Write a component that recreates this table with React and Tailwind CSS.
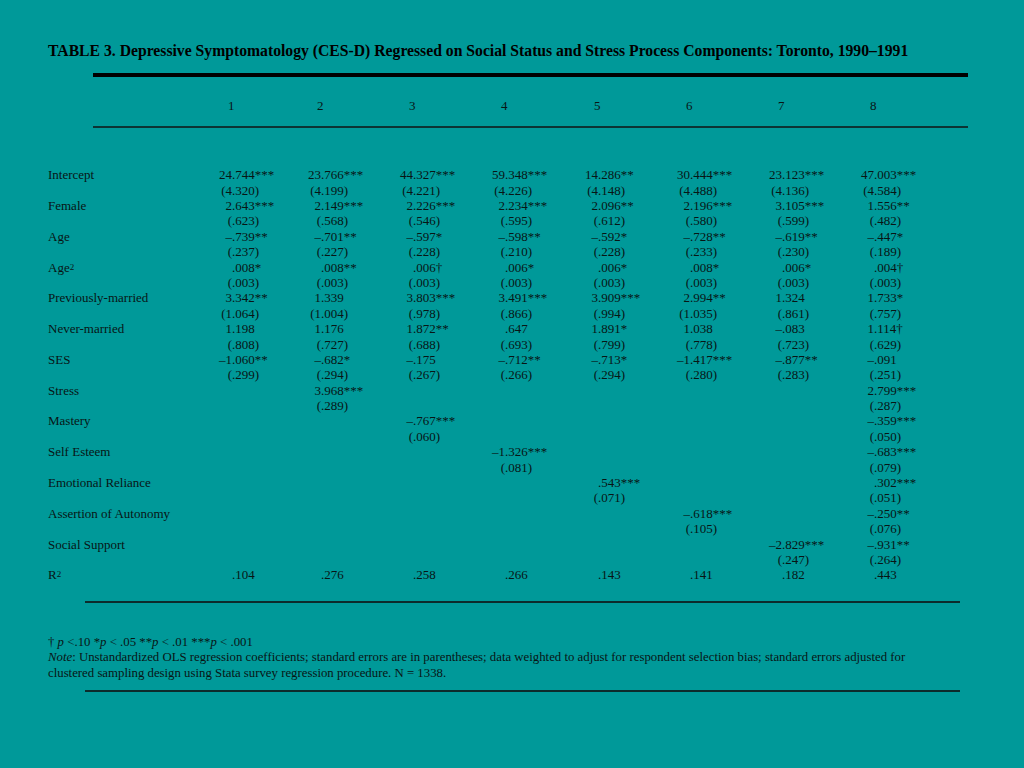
import React from "react";

const rows = [
  { label: "Intercept", c: ["24.744***", "23.766***", "44.327***", "59.348***", "14.286**", "30.444***", "23.123***", "47.003***"], s: ["(4.320)", "(4.199)", "(4.221)", "(4.226)", "(4.148)", "(4.488)", "(4.136)", "(4.584)"] },
  { label: "Female", c: ["2.643***", "2.149***", "2.226***", "2.234***", "2.096**", "2.196***", "3.105***", "1.556**"], s: ["(.623)", "(.568)", "(.546)", "(.595)", "(.612)", "(.580)", "(.599)", "(.482)"] },
  { label: "Age", c: ["–.739**", "–.701**", "–.597*", "–.598**", "–.592*", "–.728**", "–.619**", "–.447*"], s: ["(.237)", "(.227)", "(.228)", "(.210)", "(.228)", "(.233)", "(.230)", "(.189)"] },
  { label: "Age2", sup: true, c: [".008*", ".008**", ".006†", ".006*", ".006*", ".008*", ".006*", ".004†"], s: ["(.003)", "(.003)", "(.003)", "(.003)", "(.003)", "(.003)", "(.003)", "(.003)"] },
  { label: "Previously-married", c: ["3.342**", "1.339", "3.803***", "3.491***", "3.909***", "2.994**", "1.324", "1.733*"], s: ["(1.064)", "(1.004)", "(.978)", "(.866)", "(.994)", "(1.035)", "(.861)", "(.757)"] },
  { label: "Never-married", c: ["1.198", "1.176", "1.872**", ".647", "1.891*", "1.038", "–.083", "1.114†"], s: ["(.808)", "(.727)", "(.688)", "(.693)", "(.799)", "(.778)", "(.723)", "(.629)"] },
  { label: "SES", c: ["–1.060**", "–.682*", "–.175", "–.712**", "–.713*", "–1.417***", "–.877**", "–.091"], s: ["(.299)", "(.294)", "(.267)", "(.266)", "(.294)", "(.280)", "(.283)", "(.251)"] },
  { label: "Stress", c: ["", "3.968***", "", "", "", "", "", "2.799***"], s: ["", "(.289)", "", "", "", "", "", "(.287)"] },
  { label: "Mastery", c: ["", "", "–.767***", "", "", "", "", "–.359***"], s: ["", "", "(.060)", "", "", "", "", "(.050)"] },
  { label: "Self Esteem", c: ["", "", "", "–1.326***", "", "", "", "–.683***"], s: ["", "", "", "(.081)", "", "", "", "(.079)"] },
  { label: "Emotional Reliance", c: ["", "", "", "", ".543***", "", "", ".302***"], s: ["", "", "", "", "(.071)", "", "", "(.051)"] },
  { label: "Assertion of Autonomy", c: ["", "", "", "", "", "–.618***", "", "–.250**"], s: ["", "", "", "", "", "(.105)", "", "(.076)"] },
  { label: "Social Support", c: ["", "", "", "", "", "", "–2.829***", "–.931**"], s: ["", "", "", "", "", "", "(.247)", "(.264)"] },
];

const r2 = [".104", ".276", ".258", ".266", ".143", ".141", ".182", ".443"];

function Num({ v }) {
  if (!v) return <div className="h-[15.4px]" />;
  const i = v.indexOf(".");
  const a = v.slice(0, i);
  const b = v.slice(i);
  return (
    <div className="flex whitespace-nowrap h-[15.4px]">
      <span className="w-[32px] shrink-0 text-right">{a}</span>
      <span>{b}</span>
    </div>
  );
}

const grid = "grid grid-cols-[152px_89px_92px_92px_93px_92px_92px_92px_92px]";

function Label({ row }) {
  if (row.sup) {
    return (
      <span>
        Age<sup className="text-[9px] relative -top-[2px]">2</sup>
      </span>
    );
  }
  return <span>{row.label}</span>;
}

export default function App() {
  return (
    <div className="w-[1024px] h-[768px] bg-[#009999] pl-[48px] pt-[41px] font-['Liberation_Serif',serif] text-[#081515] overflow-hidden">
      <div className="text-[15.7px] leading-[20px] h-[20px] font-bold whitespace-nowrap text-black">
        TABLE 3. Depressive Symptomatology (CES-D) Regressed on Social Status and Stress Process Components: Toronto, 1990–1991
      </div>
      <div className="mt-[12px] ml-[45px] w-[875px] h-[4px] bg-black" />

      <div className={`${grid} mt-[21px] text-[13px] leading-[15.4px]`}>
        <div />
        {[1, 2, 3, 4, 5, 6, 7, 8].map((n) => (
          <div key={n} className="pl-[28px]">{n}</div>
        ))}
      </div>
      <div className="mt-[12.5px] ml-[45px] w-[875px] h-[2px] bg-[#0c3434]" />

      <div className="mt-[39.3px] text-[13px] leading-[15.4px]">
        {rows.map((row) => (
          <div key={row.label} className={grid}>
            <div className="whitespace-nowrap">
              <Label row={row} />
            </div>
            {row.c.map((c, i) => (
              <div key={i}>
                <Num v={c} />
                <Num v={row.s[i]} />
              </div>
            ))}
          </div>
        ))}
        <div className={grid}>
          <div>
            R<sup className="text-[9px] relative -top-[2px]">2</sup>
          </div>
          {r2.map((v, i) => (
            <div key={i}>
              <Num v={v} />
            </div>
          ))}
        </div>
      </div>

      <div className="mt-[18.3px] ml-[37px] w-[875px] h-[2px] bg-[#0c2c2c]" />

      <div className="mt-[31.5px] text-[12.8px] leading-[15.8px] w-[880px]">
        <div>
          † <i>p</i> &lt;.10 *<i>p</i> &lt; .05 **<i>p</i> &lt; .01 ***<i>p</i> &lt; .001
        </div>
        <div>
          <i>Note</i>: Unstandardized OLS regression coefficients; standard errors are in parentheses; data weighted to adjust for respondent selection bias; standard errors adjusted for
          <br />
          clustered sampling design using Stata survey regression procedure. N = 1338.
        </div>
      </div>
      <div className="mt-[8.5px] ml-[37px] w-[875px] h-[2px] bg-[#0c2c2c]" />
    </div>
  );
}
